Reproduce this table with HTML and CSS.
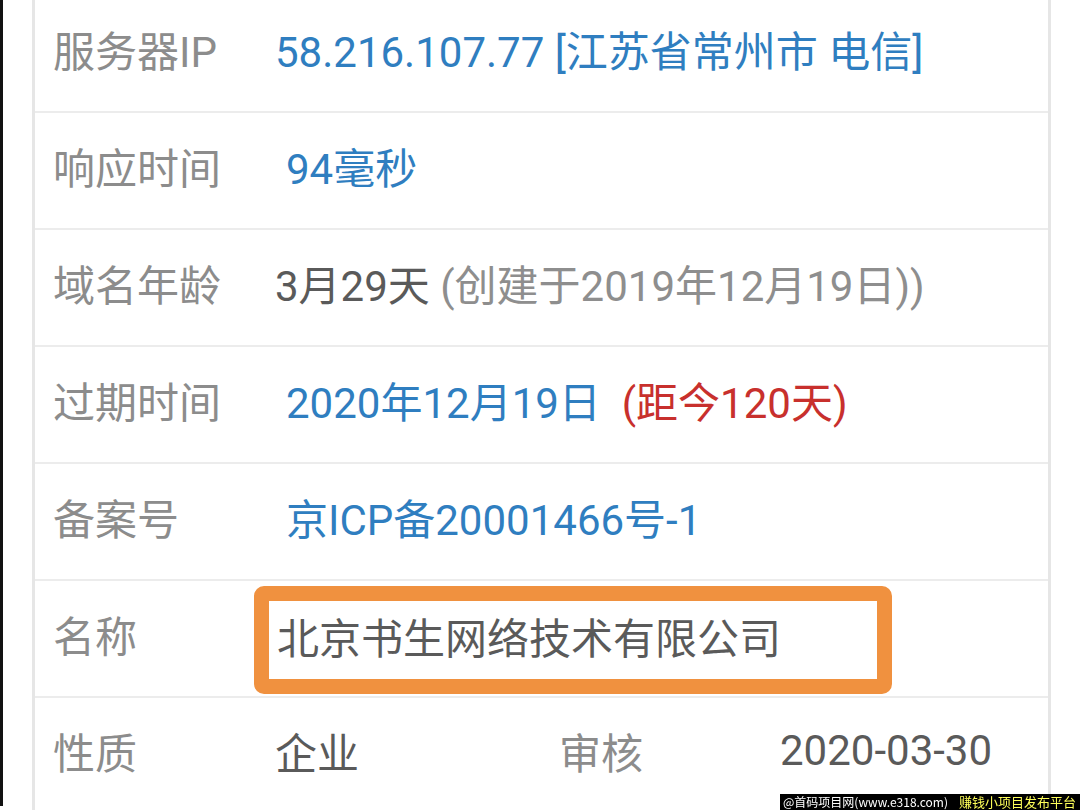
FILE: index.html
```html
<!DOCTYPE html>
<html lang="zh-CN">
  <head>
    <meta charset="UTF-8" />
    <meta name="viewport" content="width=device-width, initial-scale=1" />
    <title>域名信息</title>
    <link rel="stylesheet" href="styles.css">
  </head>
  <body>
    <div class="page">
      <div class="info-table">
        <div class="row first">
          <div class="label">服务器IP</div>
          <div class="value link">58.216.107.77 [江苏省常州市 电信]</div>
        </div>
        <div class="row">
          <div class="label">响应时间</div>
          <div class="value link indent">94毫秒</div>
        </div>
        <div class="row">
          <div class="label">域名年龄</div>
          <div class="value">3月29天 <span class="muted">(创建于2019年12月19日))</span></div>
        </div>
        <div class="row">
          <div class="label">过期时间</div>
          <div class="value link indent">2020年12月19日&nbsp; <span class="warn">(距今120天)</span></div>
        </div>
        <div class="row">
          <div class="label">备案号</div>
          <div class="value link indent">京ICP备20001466号-1</div>
        </div>
        <div class="row">
          <div class="label">名称</div>
          <div class="value boxed">
            <div class="highlight">北京书生网络技术有限公司</div>
          </div>
        </div>
        <div class="row split">
          <div class="label">性质</div>
          <div class="value">企业</div>
          <div class="label">审核</div>
          <div class="value">2020-03-30</div>
        </div>
      </div>
    </div>

    <div class="watermark">
      <span>@首码项目网(www.e318.com)</span>
      <span class="slogan">赚钱小项目发布平台</span>
    </div>
  </body>
</html>
```

FILE: styles.css
```css
html,
body {
  margin: 0;
  height: 100%;
  overflow: hidden;
  background: #fff;
}
body {
  font-family: Roboto, "Noto Sans CJK SC", sans-serif;
  font-size: 42px;
}
.page {
  border-left: 3px solid #111;
  padding-left: 29px;
  height: 100%;
}
.info-table {
  width: 1013px;
  border-left: 3px solid #e6e6e6;
  border-right: 3px solid #e6e6e6;
  margin-top: -4px;
  min-height: 830px;
}
.row {
  box-sizing: border-box;
  display: grid;
  grid-template-columns: 240px 1fr;
  grid-template-rows: 104px;
  align-items: center;
  height: 117px;
  padding-bottom: 11px;
  border-bottom: 2px solid #ececec;
}
.row.split {
  grid-template-columns: 240px 266px 239px 1fr;
  border-bottom: none;
}
.label {
  padding-left: 18px;
  color: #8c8c8c;
  white-space: nowrap;
}
.value {
  color: #5a5a5a;
  white-space: nowrap;
}
.value.boxed {
  align-self: start;
}
.link {
  color: #2f7ec0;
}
.indent {
  padding-left: 11px;
}
.muted {
  color: #8e8e8e;
}
.warn {
  color: #c8302d;
}
.highlight {
  box-sizing: border-box;
  width: 638px;
  height: 108px;
  margin: 5px 0 -9px -21px;
  padding-left: 8px;
  padding-bottom: 10px;
  display: flex;
  align-items: center;
  border: 15px solid #f0913f;
  border-radius: 10px;
  color: #5a5a5a;
}
.watermark {
  position: fixed;
  right: 0;
  bottom: 0;
  width: 300px;
  height: 16px;
  background: #000;
  color: #fff;
  font-family: "Noto Sans CJK SC", sans-serif;
  font-size: 12px;
  line-height: 16px;
  display: flex;
  justify-content: space-between;
  padding: 0 4px 0 3px;
  box-sizing: border-box;
}
.slogan {
  color: #ffff5a;
  font-size: 13px;
}
```
